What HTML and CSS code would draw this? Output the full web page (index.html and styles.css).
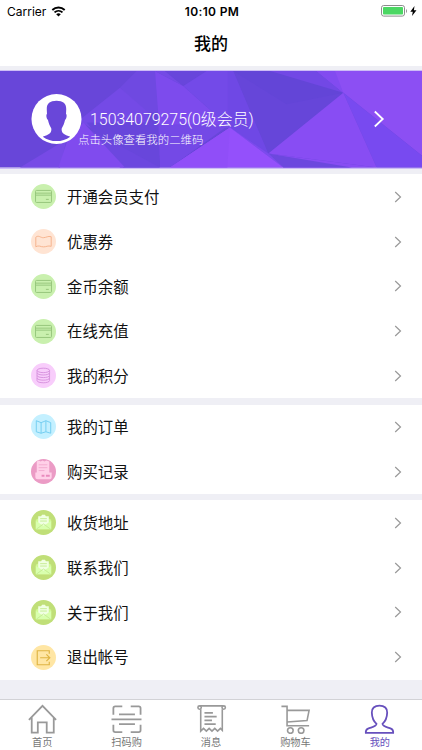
FILE: index.html
```html
<!DOCTYPE html>
<html lang="zh-CN">
<head>
    <meta charset="UTF-8">
    <meta name="viewport" content="width=device-width, initial-scale=1.0">
    <title>我的</title>
    <link rel="stylesheet" href="styles.css">
</head>
<body>
    <!-- Shared icons -->
    <svg class="sprite">
        <symbol id="card" viewBox="0 0 26 26">
            <rect x="4.700" y="6.700" width="16.600" height="12.500" rx="1"/>
            <path d="M4.700 9.500h16.600M4.700 11.600h16.600M15.500 16h3"/>
        </symbol>
        <symbol id="mail" viewBox="0 0 26 26">
            <path d="M5 10.200L13 6l8 4.200V20H5z" fill="#d0f994"/>
            <path d="M7.500 6.500h3l1-1.500h3l1 1.500h3V14L13 17.500 7.500 14z" fill="#f0ffe2"/>
            <path d="M5 11.500l8 5 8-5V20H5z" fill="#d9ffae"/>
            <path d="M5.500 20l7.500-5.500 7.500 5.500" fill="none" stroke="#bfe88a" stroke-width=".8"/>
            <path d="M9.500 9h7M9.500 11.500h7" stroke="#c6ed95" stroke-width="1"/>
        </symbol>
        <symbol id="arrow" viewBox="0 0 8 12">
            <path d="M1.200 1l5.300 5-5.300 5"/>
        </symbol>
    </svg>

    <div class="app">
        <!-- Status bar -->
        <div class="status">
            <div class="carrier">
                Carrier
                <svg class="wifi" viewBox="0 0 14 11">
                    <path d="M.8 4a9 9 0 0 1 12.400 0M3 6.400a6 6 0 0 1 8 0" fill="none" stroke="#000" stroke-width="1.900"/>
                    <path d="M4.700 8.200a3.500 3.500 0 0 1 4.600 0L7 10.600z"/>
                </svg>
            </div>
            <div class="time">10:10 PM</div>
            <div class="power">
                <svg class="battery" viewBox="0 0 27 12">
                    <rect x=".5" y=".5" width="23" height="10.600" rx="2.200" fill="#fff" stroke="#8c8c8c"/>
                    <rect x="2" y="2" width="20" height="7.600" rx=".8" fill="#4bd763"/>
                    <path d="M25 4c1.300.6 1.300 3.400 0 4z" fill="#8c8c8c"/>
                </svg>
                <svg class="bolt" viewBox="0 0 7 10"><path d="M4.500 0L.3 5.700h2.500L2 10l4.500-5.800H3.900z"/></svg>
            </div>
        </div>
        <div class="title">我的</div>

        <!-- Member banner -->
        <div class="banner">
            <svg class="banner-bg" viewBox="0 0 1266 290" preserveAspectRatio="none">
                <rect width="1266" height="290" fill="#6846d9"/>
                <path d="M410 0h55l20 125H430L360 50z" fill="#6f49e1"/>
                <path d="M360 50l85 75-5 45H270l-35-20z" fill="#744ae6"/>
                <path d="M465 0l85 45 140 125H478z" fill="#7d4bed"/>
                <path d="M465 0h30l55 45z" fill="#744ae5"/>
                <path d="M495 0h125l-70 45z" fill="#6846db"/>
                <path d="M620 0h80l105 248-115-78L550 45z" fill="#734ae8"/>
                <path d="M683 0h17l105 248-122-80z" fill="#6f48e5"/>
                <path d="M700 0l330 65-225 183z" fill="#6646d9"/>
                <path d="M700 0h180l150 65-170 35z" fill="#6345d7"/>
                <path d="M810 0h140l80 65z" fill="#7248e5"/>
                <path d="M950 0h316v255L1030 65z" fill="#8c4ff3"/>
                <path d="M950 0h55l25 65z" fill="#824bf0"/>
                <path d="M1030 65l236 190v35h-136z" fill="#784af0"/>
                <path d="M1030 65l100 225-325-42z" fill="#884df3"/>
                <path d="M805 248l325 42H850z" fill="#884df3"/>
                <path d="M805 248l250 42H850z" fill="#6c48de"/>
                <path d="M690 170l115 78 45 42z" fill="#7c4bee"/>
                <path d="M470 160h220L510 290h-30z" fill="#7449e6"/>
                <path d="M690 170l160 120H510z" fill="#9450fb"/>
                <path d="M690 170l-8 120H510z" fill="#904ef8"/>
                <path d="M260 155h215l5 135H370z" fill="#6846db"/>
                <path d="M240 160l240 130H360z" fill="#6c47df"/>
                <path d="M60 290l140-85-20 85z" fill="#774ae6"/>
                <path d="M205 200l45-45 125 135H175z" fill="#804bee"/>
            </svg>
            <svg class="avatar" viewBox="0 0 52 52">
                <circle cx="26" cy="26" r="25.500" fill="#fff"/>
                <path d="M26 7.500c-7 0-10.200 3-9.900 9l.2 4.500c-1.300.5-.4 5 1 6 .8 4 2 6 3.300 8.500 1 5-3 6.500-8.600 8.500a24 24 0 0 0 28 0c-5.600-2-9.600-3.500-8.600-8.500C32.700 33 33.900 31 34.700 27c1.400-1 2.300-5.500 1-6l.2-4.500C36.200 10.500 33 7.500 26 7.500z" fill="#6947d9"/>
            </svg>
            <div class="member">
                <div class="phone">15034079275(0级会员)</div>
                <div class="hint">点击头像查看我的二维码</div>
            </div>
            <svg class="go"><use href="#arrow"/></svg>
        </div>

        <!-- Menu -->
        <div class="group">
            <div class="row"><svg class="icon green"><use href="#card"/></svg>开通会员支付<svg class="arrow"><use href="#arrow"/></svg></div>
            <div class="row">
                <svg class="icon orange" viewBox="0 0 26 26"><path d="M5 8.500c3-2.500 5 .8 8 .5 3 0 4.500-2 8-1v10c-3.500-1-5 .6-8 .6S8 16.500 5 18.500z"/></svg>
                优惠券<svg class="arrow"><use href="#arrow"/></svg>
            </div>
            <div class="row"><svg class="icon green"><use href="#card"/></svg>金币余额<svg class="arrow"><use href="#arrow"/></svg></div>
            <div class="row"><svg class="icon green"><use href="#card"/></svg>在线充值<svg class="arrow"><use href="#arrow"/></svg></div>
            <div class="row">
                <svg class="icon violet" viewBox="0 0 26 26">
                    <ellipse cx="12.800" cy="7.700" rx="6.500" ry="2.300"/>
                    <path d="M6.300 7.700v2.500c0 3 13 3 13 0V7.700M6.300 10.200v2.700c0 3 13 3 13 0v-2.700M6.300 12.900v2.700c0 3 13 3 13 0v-2.700M6.300 15.600v2.700c0 3 13 3 13 0v-2.700"/>
                </svg>
                我的积分<svg class="arrow"><use href="#arrow"/></svg>
            </div>
        </div>
        <div class="group">
            <div class="row">
                <svg class="icon blue" viewBox="0 0 26 26"><path d="M5.500 7l5 2 5-2 5 2v11l-5-1.500-5 1.500-5-1.500zM10.500 9v11M15.500 7v11.500"/></svg>
                我的订单<svg class="arrow"><use href="#arrow"/></svg>
            </div>
            <div class="row">
                <svg class="icon pink" viewBox="0 0 26 26">
                    <path d="M6 2.500l2-1 2 1 2-1 2 1 2-1 3 1V14h2.500v5q0 2-2 2H7q-2.500 0-2.500-2v-5H6z" fill="#ffd0e8" stroke="none"/>
                    <path d="M8 6h9M8 9h9M8 12h6" stroke="#f3add0"/>
                    <path d="M11 17.500h3M15.500 17.500h4" stroke="#e98abd" stroke-width="2"/>
                </svg>
                购买记录<svg class="arrow"><use href="#arrow"/></svg>
            </div>
        </div>
        <div class="group">
            <div class="row"><svg class="icon lime"><use href="#mail"/></svg>收货地址<svg class="arrow"><use href="#arrow"/></svg></div>
            <div class="row"><svg class="icon lime"><use href="#mail"/></svg>联系我们<svg class="arrow"><use href="#arrow"/></svg></div>
            <div class="row"><svg class="icon lime"><use href="#mail"/></svg>关于我们<svg class="arrow"><use href="#arrow"/></svg></div>
            <div class="row">
                <svg class="icon yellow" viewBox="0 0 26 26"><path d="M19 9.200V6H6.500v14.500H19v-3.200M9.500 13.300h10M16 9.800l3.600 3.500L16 16.800"/></svg>
                退出帐号<svg class="arrow"><use href="#arrow"/></svg>
            </div>
        </div>

        <!-- Tab bar -->
        <div class="tabbar">
            <div class="tab">
                <svg viewBox="0 0 32 32"><path d="M1.500 17L16 2l14.500 15M4.500 14.500V30.500H11V19.500h9.500v11H28v-16"/></svg>
                首页
            </div>
            <div class="tab">
                <svg viewBox="0 0 32 32"><path d="M2 11.500V4.500q0-2 2-2h7.500M20.500 2.500H29q2 0 2 2v7M2 22v6q0 2 2 2h7.500M20.500 30H29q2 0 2-2v-6M0 16.300h32M8 11h17M8 21.500h17"/></svg>
                扫码购
            </div>
            <div class="tab">
                <svg viewBox="0 0 32 32" class="thin"><path d="M3.500 2h25M4.500 5.500V29l3-3 3 3 3-3 3 3 3-3 3 3 3-3 2 2V5.500M8.500 9.500h9M8.500 13.500h13M8.500 17.500h8M8.500 21.500h12"/><circle cx="3.300" cy="3.800" r="1.800"/><circle cx="29" cy="3.800" r="1.800"/></svg>
                消息
            </div>
            <div class="tab">
                <svg viewBox="0 0 32 32" class="thin"><path d="M1 2.500h6v20.700h23.500M7 6.800h23.500l-2.200 10.900L7 19.200"/><circle cx="10.500" cy="28.300" r="3"/><circle cx="22" cy="28.300" r="3"/></svg>
                购物车
            </div>
            <div class="tab active">
                <svg viewBox="0 0 32 32"><path d="M16 1.700c-5.300 0-8.500 3-8.200 7.500.2 6 2.200 9.500 5 12-.5 3.300-5.300 3.500-9 5-2.400 1-2.600 2.600-2.400 4.600h29.200c.2-2 0-3.600-2.400-4.600-3.700-1.500-8.500-1.700-9-5 2.800-2.500 4.800-6 5-12 .3-4.500-2.900-7.500-8.200-7.500z"/></svg>
                我的
            </div>
        </div>
    </div>
</body>
</html>
```
FILE: styles.css
```css
* {
    margin: 0;
    padding: 0;
    box-sizing: border-box;
}

body {
    font-family: "Noto Sans CJK SC", sans-serif;
    color: #111;
    background: #efeff5;
}

.sprite {
    display: none;
}

.app {
    display: flex;
    flex-direction: column;
    height: 750px;
    overflow: hidden;
}

/* Status bar */
.status {
    display: grid;
    grid-template-columns: 1fr auto 1fr;
    align-items: center;
    height: 22px;
    padding: 0 5px 0 7px;
    background: #fff;
    font-family: Inter, sans-serif;
    font-size: 12px;
    color: #000;
}

.carrier {
    display: flex;
    align-items: center;
    gap: 5px;
}

.wifi {
    width: 15px;
    height: 11px;
}

.time {
    font-weight: 600;
    letter-spacing: 0.350px;
}

.power {
    display: flex;
    justify-content: flex-end;
    align-items: center;
    gap: 2px;
}

.battery {
    width: 27px;
    height: 12px;
}

.bolt {
    width: 7px;
    height: 10px;
}

.title {
    height: 43.500px;
    line-height: 42px;
    background: #fff;
    text-align: center;
    font-size: 17px;
    font-weight: 500;
    color: #000;
}

/* Banner */
.banner {
    position: relative;
    display: flex;
    align-items: center;
    height: 98.500px;
    margin: 4.500px 0 5.900px;
    padding: 0 37px 0 31px;
    border: solid #cdbdf6;
    border-width: 1px 0;
    color: #fff;
}

.banner-bg {
    position: absolute;
    left: 0;
    top: 0;
    width: 100%;
    height: 100%;
}

.avatar {
    position: relative;
    width: 51px;
    height: 52px;
}

.member {
    position: relative;
    flex: 1;
    padding: 18px 0 0;
    margin-left: -4px;
}

.phone {
    padding-left: 12px;
    font-family: Roboto, "Noto Sans CJK SC", sans-serif;
    font-size: 15.900px;
    font-weight: 300;
    line-height: 22px;
}

.hint {
    font-size: 11.400px;
    font-weight: 300;
    line-height: 17px;
}

.go {
    position: relative;
    width: 12px;
    height: 18px;
    fill: none;
    stroke: #fff;
    stroke-width: 1.200;
}

/* Menu groups */
.group {
    margin-bottom: 6.200px;
    background: #fff;
}

.row {
    display: flex;
    align-items: center;
    height: 44.800px;
    padding: 0 20px 1.500px 31px;
    font-size: 15.400px;
}

.icon {
    width: 25px;
    height: 25px;
    margin: 1.500px 11px 0 0;
    border-radius: 50%;
    fill: none;
    stroke-width: 1;
}

.arrow {
    width: 8px;
    height: 12px;
    margin: 1.500px 0 0 auto;
    fill: none;
    stroke: #999;
    stroke-width: 1.200;
}

.green {
    background: #c9f0ae;
    stroke: #96c67c;
}

.orange {
    background: #ffe4d3;
    stroke: #f6b38c;
}

.violet {
    background: #f8cdfb;
    stroke: #d793df;
}

.blue {
    background: #c4f0ff;
    stroke: #72cdf0;
}

.pink {
    background: #eb9bc5;
}

.lime {
    background: #c0df78;
}

.yellow {
    background: #ffe6a4;
    stroke: #dfb443;
    stroke-width: 1.200;
}

/* Tab bar */
.tabbar {
    display: flex;
    height: 51px;
    margin-top: auto;
    border-top: 1px solid #d2d2d6;
    background: #fff;
}

.tab {
    flex: 1;
    display: flex;
    flex-direction: column;
    align-items: center;
    padding-top: 4px;
    font-size: 10.200px;
    line-height: 16px;
    color: #777;
}

.tab svg {
    width: 31px;
    height: 31px;
    fill: none;
    stroke: #999;
    stroke-width: 1.900;
}

.tab .thin {
    stroke-width: 1.700;
}

.active {
    color: #6750bd;
}

.tab.active svg {
    stroke: #6750bd;
}
```
